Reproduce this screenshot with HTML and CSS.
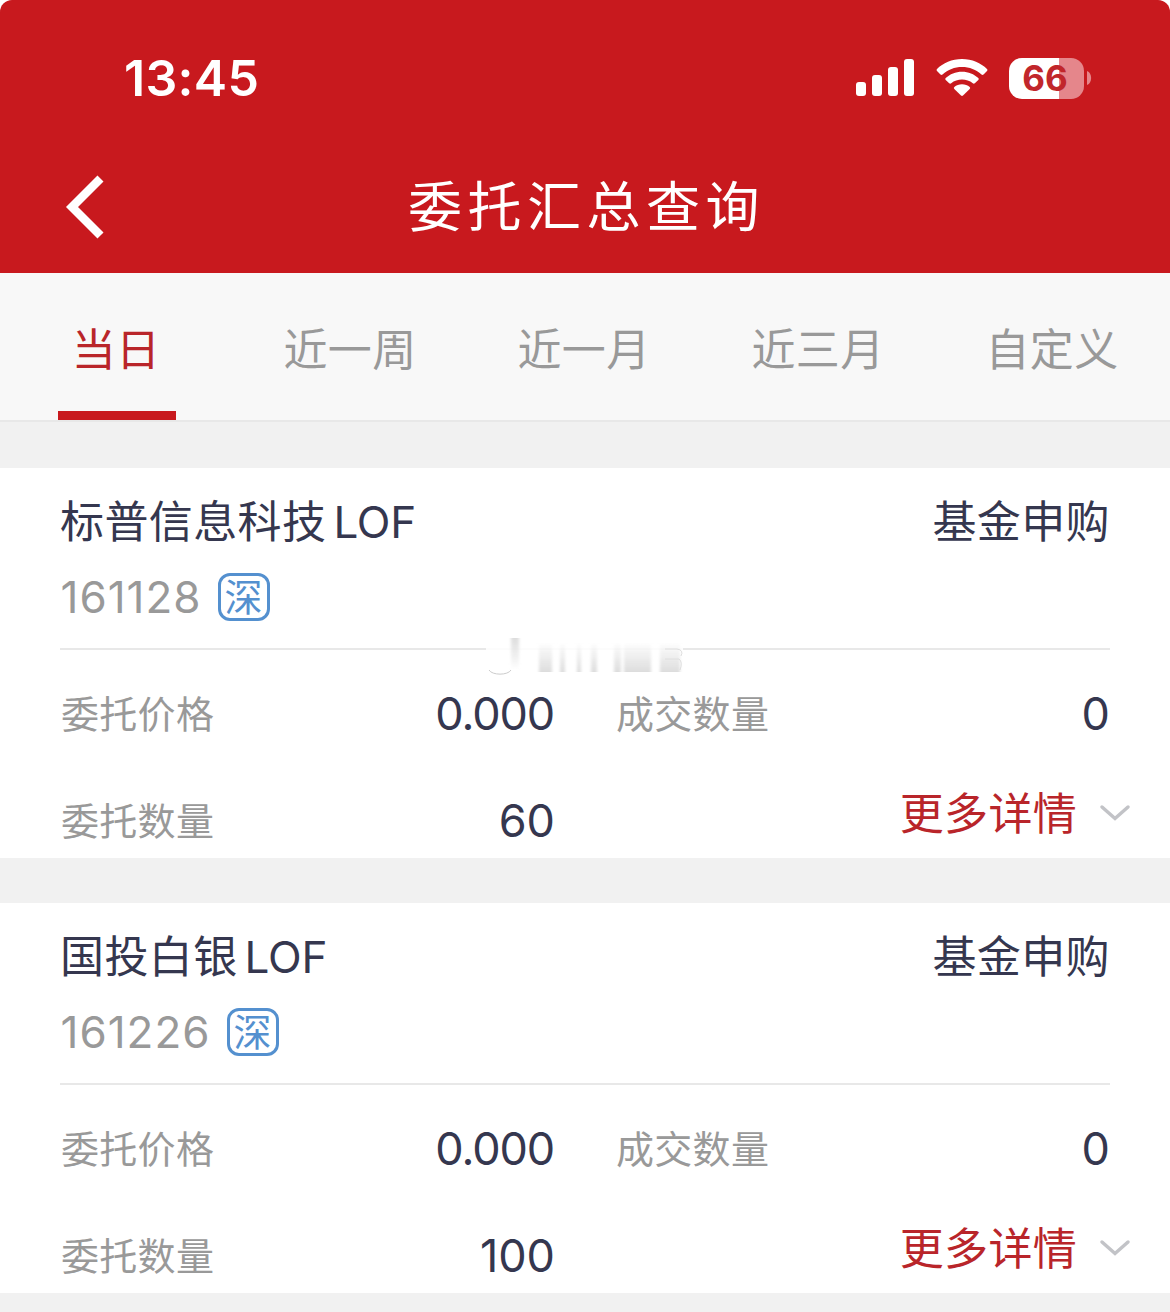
FILE: index.html
```html
<!DOCTYPE html>
<html lang="zh-CN">
<head>
<meta charset="utf-8">
<title>委托汇总查询</title>
<link rel="stylesheet" href="styles.css">
</head>
<body>
<header class="header">
  <div class="status">
    <span class="time">13:45</span>
    <div class="status-icons">
      <svg class="signal" width="58" height="38" viewBox="0 0 58 38" fill="#fff">
        <rect x="0" y="23" width="10" height="14" rx="3"/>
        <rect x="16" y="16" width="10" height="21" rx="3"/>
        <rect x="32" y="8" width="10" height="29" rx="3"/>
        <rect x="48" y="0" width="10" height="37" rx="3"/>
      </svg>
      <svg class="wifi" width="52" height="38" viewBox="0 0 52 38" fill="#fff">
        <path d="M26 0C36 0 45 4 51 10Q52 11 51 12L47.500 15.500Q46.500 16.300 45.500 15.500C40 10.500 33.500 8 26 8S12 10.500 6.500 15.500Q5.500 16.300 4.500 15.500L1 12Q0 11 1 10C7 4 16 0 26 0Z"/>
        <path d="M26 12.700C32.500 12.700 38 15 42.300 19Q43.300 20 42.300 21L38.800 24.300Q37.800 25.200 36.800 24.300C33.800 21.700 30 20.500 26 20.500S18.200 21.700 15.200 24.300Q14.200 25.200 13.200 24.300L9.700 21Q8.700 20 9.700 19C14 15 19.500 12.700 26 12.700Z"/>
        <path d="M26 25.300C29 25.300 31.600 26.200 33.700 27.900Q34.700 28.900 33.700 29.900L27 36.500Q26 37.400 25 36.500L18.300 29.900Q17.300 28.900 18.300 27.900C20.400 26.200 23 25.300 26 25.300Z"/>
      </svg>
      <div class="battery"><span>66</span></div>
      <svg class="nub" width="5" height="14" viewBox="0 0 5 14"><path d="M0 0C5.500 2 5.500 12 0 14Z" fill="#e5868b"/></svg>
    </div>
  </div>
  <div class="navbar">
    <svg class="back" width="40" height="64" viewBox="0 0 40 64"><path d="M35.500 3.500L7 32L35.500 60.500" fill="none" stroke="#fff" stroke-width="8.500"/></svg>
    <h1>委托汇总查询</h1>
  </div>
</header>
<nav class="tabs">
  <a class="tab active">当日</a>
  <a class="tab">近一周</a>
  <a class="tab">近一月</a>
  <a class="tab">近三月</a>
  <a class="tab">自定义</a>
</nav>
<main class="list">
  <section class="card">
    <div class="title-row"><span>标普信息科技<b class="latin">LOF</b></span><span class="kind">基金申购</span></div>
    <div class="code-row"><span class="code">161128</span><span class="badge">深</span></div>
    <svg class="smudge" width="204" height="42" viewBox="0 0 204 42">
      <defs>
        <linearGradient id="fade" x1="0" y1="0" x2="0" y2="1"><stop offset="0" stop-color="#ddd" stop-opacity="0"/><stop offset="1" stop-color="#ddd"/></linearGradient>
        <linearGradient id="fade-up" x1="0" y1="1" x2="0" y2="0"><stop offset="0" stop-color="#ddd" stop-opacity="0"/><stop offset="1" stop-color="#ddd"/></linearGradient>
        <filter id="soft"><feGaussianBlur stdDeviation="1.500 0.500"/></filter>
      </defs>
      <rect x="3" y="5" width="197" height="35" fill="#fff" opacity=".85"/>
      <path d="M6 34C9 39.500 25 39.500 28 34" fill="none" stroke="#ccc"/>
      <g fill="url(#fade)" filter="url(#soft)">
        <rect x="28" y="2" width="8" height="32" fill="url(#fade-up)"/>
        <rect x="56" y="6" width="13" height="30"/>
        <rect x="77" y="6" width="5" height="30"/>
        <rect x="94" y="6" width="4" height="30"/>
        <rect x="108" y="6" width="6" height="30"/>
        <rect x="131" y="6" width="7" height="30"/>
        <rect x="141" y="6" width="27" height="30"/>
        <rect x="177" y="6" width="20" height="30"/>
      </g>
      <path d="M182 13H194Q201 14 198 20M182 23H196Q200 26 197 34" fill="none" stroke="#dedede"/>
    </svg>
    <div class="details">
      <div class="cell"><span class="label">委托价格</span><span class="value decimal">0.000</span></div>
      <div class="cell"><span class="label">成交数量</span><span class="value">0</span></div>
      <div class="cell"><span class="label">委托数量</span><span class="value">60</span></div>
      <div class="more"><span>更多详情</span><svg width="32" height="18" viewBox="0 0 32 18"><path d="M3 3L16 14.500L29 3" fill="none" stroke="#c2c3c7" stroke-width="3.500" stroke-linecap="round"/></svg></div>
    </div>
  </section>
  <section class="card">
    <div class="title-row"><span>国投白银<b class="latin">LOF</b></span><span class="kind">基金申购</span></div>
    <div class="code-row"><span class="code">161226</span><span class="badge">深</span></div>
    <div class="details">
      <div class="cell"><span class="label">委托价格</span><span class="value decimal">0.000</span></div>
      <div class="cell"><span class="label">成交数量</span><span class="value">0</span></div>
      <div class="cell"><span class="label">委托数量</span><span class="value">100</span></div>
      <div class="more"><span>更多详情</span><svg width="32" height="18" viewBox="0 0 32 18"><path d="M3 3L16 14.500L29 3" fill="none" stroke="#c2c3c7" stroke-width="3.500" stroke-linecap="round"/></svg></div>
    </div>
  </section>
</main>
</body>
</html>
```
FILE: styles.css
```css
* { box-sizing: border-box; }
body {
  margin: 0;
  width: 1170px;
  height: 1312px;
  overflow: hidden;
  background: #fff;
  font-family: Inter, "Noto Sans CJK SC", sans-serif;
  color: #35374f;
}
.header {
  height: 273px;
  background: #c8191e;
  border-radius: 12px 12px 0 0;
  color: #fff;
}
.status {
  display: flex;
  justify-content: space-between;
  height: 142px;
  padding: 48px 78px 0 124px;
}
.time {
  font-size: 50px;
  font-weight: 600;
  line-height: 60px;
  letter-spacing: 0.300px;
}
.status-icons {
  display: flex;
  align-items: center;
  height: 60px;
}
.wifi { margin-left: 22px; }
.battery {
  width: 75px;
  height: 41px;
  margin-left: 21px;
  border-radius: 13px;
  background: linear-gradient(to right, #fff 50px, #e5868b 50px);
  color: #c1262b;
  font-size: 35px;
  font-weight: 700;
  line-height: 41px;
  text-align: center;
}
.battery span { margin-right: 3px; }
.nub { margin-left: 3px; }
.navbar {
  display: grid;
  grid-template-columns: 106px 1fr 106px;
  align-items: center;
  height: 129px;
}
.back { margin-left: 65px; }
h1 {
  margin: 0;
  padding: 2px 0 0 3px;
  font-size: 54px;
  font-weight: 400;
  line-height: 70px;
  letter-spacing: 5.500px;
  text-align: center;
}
.tabs {
  display: grid;
  grid-template-columns: repeat(5, 234px);
  justify-items: center;
  height: 149px;
  background: #f8f8f8;
  border-bottom: 2px solid #e8e8e8;
}
.tab {
  height: 147px;
  padding: 52px 2px 0 0;
  color: #999;
  font-size: 44px;
  line-height: 50px;
  letter-spacing: 0.300px;
}
.tab.active {
  width: 118px;
  color: #b9252a;
  text-align: center;
  border-bottom: 9px solid #c8191e;
}
.list {
  display: flex;
  flex-direction: column;
  gap: 45px;
  height: 890px;
  padding-top: 46px;
  background: #f1f1f1;
}
.card {
  position: relative;
  flex: none;
  height: 390px;
  padding: 29px 60px 0;
  background: #fff;
}
.title-row {
  display: flex;
  justify-content: space-between;
  height: 50px;
  font-size: 44px;
  line-height: 51px;
  letter-spacing: 0.400px;
}
.latin {
  margin-left: 7px;
  font-weight: 400;
  letter-spacing: -0.200px;
}
.code-row {
  display: flex;
  align-items: center;
  gap: 16px;
  height: 48px;
  margin-top: 26px;
}
.code {
  padding-left: 0.500px;
  color: #999;
  font-size: 44px;
  letter-spacing: 1px;
}
.badge {
  width: 52px;
  height: 48px;
  border: 3px solid #5490cf;
  border-radius: 12px;
  color: #5490cf;
  font-size: 38px;
  line-height: 42px;
  text-align: center;
}
.smudge {
  position: absolute;
  left: 483px;
  top: 168px;
}
.details {
  display: grid;
  grid-template-columns: 495px 495px;
  column-gap: 60px;
  row-gap: 57px;
  margin-top: 27px;
  padding-top: 39px;
  border-top: 2px solid #e8e8e8;
}
.cell {
  display: flex;
  justify-content: space-between;
  height: 50px;
  line-height: 50px;
}
.label {
  padding-left: 1px;
  color: #999;
  font-size: 38px;
  letter-spacing: 0.300px;
}
.value { font-size: 45px; }
.decimal {
  margin-right: 1px;
  letter-spacing: -1.100px;
}
.more {
  display: flex;
  align-items: center;
  justify-content: flex-end;
  gap: 22px;
  height: 50px;
  margin: -8px -21px 0 0;
  color: #b9252a;
  font-size: 44px;
  line-height: 50px;
  letter-spacing: 0.300px;
}
.more span { padding-top: 2px; }
```
